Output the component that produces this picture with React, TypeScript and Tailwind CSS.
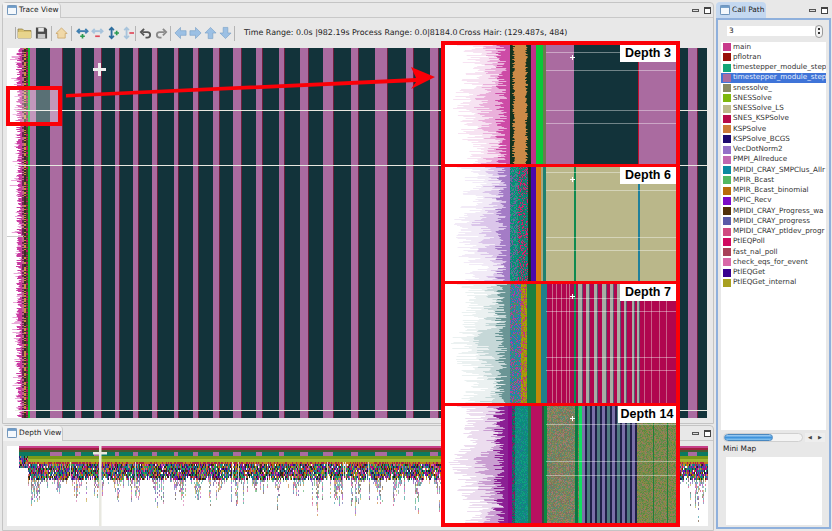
import { ReactNode } from 'react';

type Bar = [number, number, number, number, string, number?];

const DARK = '#12333a';
const PINK = '#aa6ba0';
const PALETTE = ['#7a10b0', '#0a8a70', '#b0a020', '#c01a60', '#2a1a80', '#3aa050', '#d060a0', '#4f5aa0', '#503010', '#10808f', '#c06a10', '#202020'];

// small seeded generator so the picture is the same on every run
function makeRandom(seed: number) {
  let s = seed;
  return () => {
    s = (s * 16807) % 2147483647;
    return (s - 1) / 2147483646;
  };
}

const CALLS: [string, string][] = [
  ['main', '#c83a8c'],
  ['pflotran', '#990f0a'],
  ['timestepper_module_step', '#12a678'],
  ['timestepper_module_step', '#aa6ba0'],
  ['snessolve_', '#8a8a62'],
  ['SNESSolve', '#7fb80e'],
  ['SNESSolve_LS', '#bcb98a'],
  ['SNES_KSPSolve', '#b80a4a'],
  ['KSPSolve', '#cc7a38'],
  ['KSPSolve_BCGS', '#1e0a70'],
  ['VecDotNorm2', '#9470c8'],
  ['PMPI_Allreduce', '#c068b0'],
  ['MPIDI_CRAY_SMPClus_Allr', '#0a8aa0'],
  ['MPIR_Bcast', '#52b860'],
  ['MPIR_Bcast_binomial', '#b86a0a'],
  ['MPIC_Recv', '#7a0ac8'],
  ['MPIDI_CRAY_Progress_wa', '#50300a'],
  ['MPIDI_CRAY_progress', '#5a5aa8'],
  ['MPIDI_CRAY_ptldev_progr', '#d04a80'],
  ['PtlEQPoll', '#d00a60'],
  ['fast_nal_poll', '#a84058'],
  ['check_eqs_for_event', '#d868a8'],
  ['PtlEQGet', '#38008f'],
  ['PtlEQGet_internal', '#a8a020'],
];

// pink stripes of the trace view, in canvas pixels (canvas starts at x=7)
const STRIPES = [
  [43, 12], [68, 6], [87, 7], [108, 4], [126, 5], [145, 5], [167, 4], [186, 5], [206, 6], [226, 8],
  [249, 6], [272, 5], [293, 8], [316, 10], [344, 7], [368, 12], [399, 7], [423, 8], [465, 10], [490, 8],
  [515, 9], [540, 7], [565, 8], [590, 9], [615, 7], [640, 8], [681, 9],
];

function traceBars(): Bar[] {
  const r = makeRandom(11);
  const bars: Bar[] = [[29, 0, 671, 370, DARK]];
  STRIPES.forEach(([x, w]) => {
    bars.push([x, 0, w, 370, PINK]);
    bars.push([x + w, 0, 0.8, 370, '#a01840', 0.8]);
  });
  for (let y = 0; y < 370; y += 1) {
    const a = 15 - r() * r() * 13;
    bars.push([a, y, 15 - a, 1, '#e9a6d8']);
    const b = 15 - r() * 6;
    bars.push([b, y, 15 - b, 1, '#c93aa0']);
    bars.push([15, y, 2, 1, r() > 0.5 ? '#6a2a50' : '#c0608a']);
    bars.push([17, y, 2, 1, r() > 0.5 ? '#c89040' : '#3a3020']);
    bars.push([19, y, 2, 1, r() > 0.6 ? '#b01060' : '#504030']);
  }
  bars.push([21, 0, 2, 370, '#10c030']);
  bars.push([23, 0, 6, 370, PINK]);
  [62, 117, 362].forEach((y) => bars.push([8, y, 692, 1, '#e8e8e0']));
  bars.push([0, 188, 16, 1, '#cccccc']);
  // cross hair
  bars.push([86, 20, 13, 3, '#f0f0f0']);
  bars.push([91, 15, 3, 13, '#f0f0f0']);
  return bars;
}

function jagged(bars: Bar[], r: () => number, h: number, color: string, strong: string, edge = 66) {
  for (let y = 0; y < h; y += 1) {
    const swing = Math.sin(y / 13) * 6 + Math.sin(y / 5) * 3;
    const a = 12 + r() * 24 + swing;
    bars.push([a, y, edge - a, 1, color, 0.16]);
    const b = 34 + r() * 18 + swing;
    bars.push([b, y, edge - b, 1, color, 0.35]);
    const c = edge - 3 - r() * 12;
    bars.push([c, y, edge - c, 1, strong, 0.85]);
  }
}

function noise(bars: Bar[], r: () => number, x: number, w: number, h: number, colors: string[]) {
  for (let i = 0; i < w; i += 1) {
    for (let y = 0; y < h; y += 1) {
      bars.push([x + i, y, 1, 1, colors[Math.floor(r() * colors.length)]]);
    }
  }
}

function hairlines(bars: Bar[], h: number, ys: number[]) {
  ys.forEach((y) => {
    if (y < h) bars.push([101, y, 130, 1, '#ffffff', 0.4]);
  });
  bars.push([125, 12, 5, 1, '#ffffff']);
  bars.push([127, 10, 1, 5, '#ffffff']);
}

function depth3(): Bar[] {
  const r = makeRandom(21);
  const h = 119;
  const bars: Bar[] = [];
  jagged(bars, r, h, '#d050b0', '#c83a9c', 65);
  bars.push([65, 0, 21, h, '#14331f']);
  for (let y = 0; y < h; y += 1) {
    const a = 67 + r() * 3;
    bars.push([a, y, 80 + r() * 3 - a, 1, '#cc8a48']);
  }
  bars.push([86, 0, 5, h, '#c0308a']);
  bars.push([91, 0, 7, h, '#08c838']);
  bars.push([98, 0, 3, h, '#6a7a50']);
  bars.push([101, 0, 28, h, PINK]);
  bars.push([129, 0, 65, h, DARK]);
  bars.push([194, 0, 37, h, PINK]);
  bars.push([193, 0, 1, h, '#c01030']);
  hairlines(bars, h, [7, 25, 65, 78]);
  return bars;
}

function depth6(): Bar[] {
  const r = makeRandom(33);
  const h = 114;
  const bars: Bar[] = [];
  jagged(bars, r, h, '#b080d0', '#9a70c0', 65);
  noise(bars, r, 65, 8, h, ['#0a8a78', '#0a8a78', '#20a080', '#7a5aa0']);
  noise(bars, r, 73, 10, h, ['#0a8a78', '#0a8a78', '#e01a70', '#2a6a60']);
  bars.push([83, 0, 3, h, '#14331f']);
  bars.push([86, 0, 5, h, '#4a08a8']);
  bars.push([91, 0, 5, h, '#d87a10']);
  bars.push([96, 0, 2, h, '#a8a880']);
  bars.push([98, 0, 3, h, '#208070']);
  bars.push([101, 0, 130, h, '#bab78a']);
  bars.push([129, 0, 2, h, '#0f8a50']);
  bars.push([193, 0, 2, h, '#20809a']);
  hairlines(bars, h, [5, 23, 70, 83]);
  return bars;
}

function depth7(): Bar[] {
  const r = makeRandom(45);
  const h = 119;
  const bars: Bar[] = [];
  jagged(bars, r, h, '#80a8a8', '#5a8a8a', 65);
  noise(bars, r, 65, 11, h, ['#20909a', '#b040a0', '#508a60', '#2080b0']);
  noise(bars, r, 76, 6, h, ['#a8a008', '#a8a008', '#c03080', '#a09010']);
  bars.push([82, 0, 9, h, '#1a8040']);
  bars.push([91, 0, 5, h, '#c08a08']);
  bars.push([96, 0, 6, h, '#20808a']);
  bars.push([102, 0, 129, h, '#b0064f']);
  [107, 111, 116, 121, 124].forEach((x) => bars.push([x, 0, 1, h, '#d08098', 0.8]));
  bars.push([129, 0, 2, h, '#0a8a50']);
  [
    [133, 4], [141, 3], [149, 3], [157, 4], [165, 3], [172, 3], [179, 2], [187, 2], [192, 2],
  ].forEach(([x, w]) => {
    bars.push([x, 0, w, h, '#a8aca4']);
    bars.push([x + w, 0, 1, h, '#209088', 0.6]);
  });
  [199, 206, 214, 221].forEach((x) => bars.push([x, 0, 1, h, '#c86088']));
  hairlines(bars, h, [14, 27, 73, 86]);
  return bars;
}

function depth14(): Bar[] {
  const r = makeRandom(57);
  const h = 117;
  const bars: Bar[] = [];
  jagged(bars, r, h, '#8a2a9a', '#800a8a', 63);
  bars.push([63, 0, 4, h, '#8a0a8a']);
  noise(bars, r, 67, 3, h, ['#0a6a60', '#802060', '#206a70']);
  noise(bars, r, 70, 13, h, ['#0a8a80', '#108a78', '#207a90', '#10a080']);
  bars.push([83, 0, 3, h, '#207a50']);
  bars.push([86, 0, 11, h, '#b81060']);
  bars.push([97, 0, 2, h, '#404040']);
  bars.push([99, 0, 3, h, '#0a8a40']);
  const olive = ['#8a8a50', '#6a8a60', '#a07a70', '#80705a', '#5a8a70'];
  noise(bars, r, 102, 28, h, olive);
  bars.push([130, 0, 3, h, '#0a7a40']);
  noise(bars, r, 133, 1, h, olive);
  bars.push([134, 0, 3, h, '#10e060']);
  for (let x = 137; x < 192; x += 5) {
    bars.push([x, 0, 3, h, x % 2 ? '#7a70a8' : '#507a80']);
    bars.push([x + 3, 0, 2, h, '#202048']);
  }
  noise(bars, r, 192, 39, h, ['#7a8a50', '#8a8a40', '#6a8a50', '#9a7a60', '#5a8a40']);
  [208, 222].forEach((x) => bars.push([x, 0, 1, h, '#20803a']));
  hairlines(bars, h, [18, 55, 69]);
  return bars;
}

function depthViewBars(): Bar[] {
  const r = makeRandom(71);
  const bars: Bar[] = [];
  const W = 701;
  bars.push([12, 0, W - 12, 2, '#c8408a']);
  bars.push([12, 2, W - 12, 2, '#a02040']);
  bars.push([12, 4, W - 12, 2, '#4a5a30']);
  bars.push([12, 6, W - 12, 4, '#0a7a60']);
  STRIPES.forEach(([s, w]) => bars.push([s, 6, w, 4, PINK]));
  bars.push([12, 10, W - 12, 3, '#7a9a18']);
  bars.push([12, 13, W - 12, 3, '#a0b830']);
  for (let x = 12; x < W; x += 1) {
    bars.push([x, 16, 1, 2, r() > 0.5 ? '#b02048' : '#c07a20']);
    if (x < 21) {
      for (let y = 10; y < 22; y += 2) bars.push([x, y, 1, 2, PALETTE[Math.floor(r() * PALETTE.length)]]);
      continue;
    }
    // hanging stacks come in clusters along the time axis
    const cluster = Math.pow(Math.abs(Math.sin((x * Math.PI) / 20)), 6);
    const depth = 28 + r() * 6 + cluster * r() * 30 + Math.pow(r(), 8) * 30;
    for (let y = 18; y < depth; y += 2) {
      const fade = y > 32 ? 0.55 : 1;
      if (r() < (y > 32 ? 0.7 : 0.96)) bars.push([x, y, 1, 2, PALETTE[Math.floor(r() * PALETTE.length)], fade]);
    }
    if (r() > 0.985) bars.push([x, 16, 1, 20 + r() * 10, '#ffffff', 0.7]);
  }
  bars.push([92, 0, 2.5, 80, '#e8e8e0']);
  bars.push([86, 6, 14, 2.5, '#e8e8e0']);
  return bars;
}

function Bars({ w, h, bars, className }: { w: number; h: number; bars: Bar[]; className?: string }) {
  return (
    <svg viewBox={`0 0 ${w} ${h}`} width={w} height={h} className={className}>
      {bars.map(([x, y, bw, bh, fill, opacity], i) => (
        <rect key={i} x={x} y={y} width={bw} height={bh} fill={fill} opacity={opacity} />
      ))}
    </svg>
  );
}

function ViewIcon() {
  return (
    <svg viewBox="0 0 12 12" className="w-[10px] h-[10px] shrink-0">
      <rect x="0.5" y="0.5" width="11" height="11" rx="1" fill="#f4f8fc" stroke="#4a78a8" />
      <rect x="1" y="1" width="10" height="2.5" fill="#6f9cc8" />
    </svg>
  );
}

function WindowButtons({ className = '' }: { className?: string }) {
  return (
    <div className={`flex items-center gap-[5px] ${className}`}>
      <div className="w-[7px] h-[3px] border border-[#555] bg-[#ddd]" />
      <div className="w-[7px] h-[7px] border border-[#444] border-t-2 bg-white" />
    </div>
  );
}

function Sep() {
  return <div className="w-px h-[15px] bg-[#b4b4b4] shrink-0" />;
}

function IconSvg({ children, w = 13 }: { children: ReactNode; w?: number }) {
  return (
    <svg viewBox="0 0 14 14" width={w} height={14} className="shrink-0">
      {children}
    </svg>
  );
}

function BlockArrow({ rot, fill = '#9cc0e4' }: { rot: number; fill?: string }) {
  return (
    <IconSvg>
      <path
        d="M1 7 L7 1 L7 4.5 L13 4.5 L13 9.5 L7 9.5 L7 13 Z"
        fill={fill}
        stroke="#7aa0c8"
        strokeWidth="0.7"
        transform={`rotate(${rot} 7 7)`}
      />
    </IconSvg>
  );
}

function ZoomArrow({ vertical, color, sign, signColor }: { vertical: boolean; color: string; sign: '+' | '-'; signColor: string }) {
  return (
    <IconSvg>
      <g transform={vertical ? 'rotate(90 7 7) translate(0 3)' : ''} fill="none" stroke={color} strokeWidth="2">
        <path d="M2 5 H12" />
        <path d="M4 2.5 L1.5 5 L4 7.5" />
        <path d="M10 2.5 L12.5 5 L10 7.5" />
      </g>
      {vertical ? (
        <path d={sign === '+' ? 'M9 7 H14 M11.5 4.5 V9.5' : 'M9 7 H14'} stroke={signColor} strokeWidth="1.8" />
      ) : (
        <path d={sign === '+' ? 'M4.5 10.5 H9.5 M7 8 V13' : 'M4.5 10.5 H9.5'} stroke={signColor} strokeWidth="1.8" />
      )}
    </IconSvg>
  );
}

function Toolbar() {
  return (
    <div className="h-[30px] flex items-center pl-[12px] text-[7.9px] text-[#222] shrink-0">
      <div className="w-px h-[12px] bg-[#aaa] mr-px" />
      <IconSvg w={15}>
        <path d="M0.5 3 H5 L6.5 4.5 H13.5 V12 H0.5 Z" fill="#d8c070" stroke="#8a7a40" strokeWidth="0.7" />
        <path d="M0.5 6 H13.5 V12 H0.5 Z" fill="#e8d48c" />
      </IconSvg>
      <div className="ml-[3px]">
        <IconSvg>
          <path d="M1 1 H11 L13 3 V13 H1 Z" fill="#4a4a4a" />
          <rect x="3.5" y="1.5" width="6" height="4" fill="#e8e8e8" />
          <rect x="3" y="8" width="8" height="5" fill="#c8c8c8" />
        </IconSvg>
      </div>
      <div className="mx-[3px]"><Sep /></div>
      <IconSvg>
        <path d="M7 1.5 L13 7.5 H11 V12.5 H3 V7.5 H1 Z" fill="#f0d8a8" stroke="#c8a060" strokeWidth="0.8" />
      </IconSvg>
      <div className="mx-[3px]"><Sep /></div>
      <div className="flex items-center gap-[2px] ml-[1px]">
        <ZoomArrow vertical={false} color="#3f7fb0" sign="+" signColor="#2a9a50" />
        <ZoomArrow vertical={false} color="#a8c4dc" sign="-" signColor="#e04a5a" />
        <ZoomArrow vertical color="#2f6f9f" sign="+" signColor="#2a9a50" />
        <ZoomArrow vertical color="#a8c4dc" sign="-" signColor="#e04a5a" />
      </div>
      <div className="ml-[1px] mr-[3px]"><Sep /></div>
      <div className="flex items-center gap-[3px]">
        <IconSvg>
          <path d="M4 6 H9 A3 3 0 0 1 9 12 H7 M5.5 2.5 L2 6 L5.5 9.5" fill="none" stroke="#555" strokeWidth="2" />
        </IconSvg>
        <IconSvg>
          <path d="M10 6 H5 A3 3 0 0 0 5 12 H7 M8.5 2.5 L12 6 L8.5 9.5" fill="none" stroke="#8a8a8a" strokeWidth="2" />
        </IconSvg>
      </div>
      <div className="ml-[2px] mr-[3px]"><Sep /></div>
      <div className="flex items-center gap-[2px]">
        <BlockArrow rot={0} />
        <BlockArrow rot={180} />
        <BlockArrow rot={90} />
        <BlockArrow rot={-90} />
      </div>
      <div className="ml-[2px]"><Sep /></div>
      <div className="ml-[9px] w-[108px] whitespace-nowrap">Time Range: 0.0s |982.19s</div>
      <div className="w-[107px] whitespace-nowrap">Process Range: 0.0|8184.0</div>
      <div className="whitespace-nowrap">Cross Hair: (129.487s, 484)</div>
    </div>
  );
}

function DepthPanel({ label, height, bars, labelWidth }: { label: string; height: number; bars: Bar[]; labelWidth: string }) {
  return (
    <div className="relative overflow-hidden bg-white shrink-0" style={{ height }}>
      <Bars w={231} h={height} bars={bars} className="block blur-[0.5px]" />
      <div className={`absolute right-0 top-0 h-[17px] bg-white flex items-center justify-center whitespace-nowrap font-bold text-[12.5px] text-black font-['Liberation_Sans',sans-serif] ${labelWidth}`}>
        {label}
      </div>
    </div>
  );
}

export default function App() {
  return (
    <div className="relative w-[832px] h-[531px] overflow-hidden bg-[#e8e8e8] flex font-['DejaVu_Sans','Liberation_Sans',sans-serif]">
      <div className="w-[716px] flex flex-col pt-[2px] shrink-0">
        {/* trace view */}
        <div className="h-[422px] mx-[2px] border border-[#c4c4c4] rounded-t flex flex-col shrink-0">
          <div className="h-[15px] flex items-center justify-between border-b border-[#c8c8c8] shrink-0">
            <div className="h-[15px] w-[58px] bg-[#f2f2f2] border-r border-[#c8c8c8] rounded-tr flex items-center gap-[2px] pl-[4px] text-[7.4px] text-[#222]">
              <ViewIcon />
              <span className="whitespace-nowrap">Trace View</span>
            </div>
            <WindowButtons className="mr-[2px]" />
          </div>
          <Toolbar />
          <div className="ml-[4px] w-[700px] h-[370px] bg-white">
            <Bars w={700} h={370} bars={traceBars()} className="block blur-[0.4px]" />
          </div>
        </div>
        {/* depth view */}
        <div className="flex-1 mt-[1px] mx-[2px] border border-[#c4c4c4] rounded-t flex flex-col">
          <div className="h-[15px] flex items-center justify-between border-b border-[#c8c8c8] shrink-0">
            <div className="h-[15px] w-[60px] bg-[#f2f2f2] border-r border-[#c8c8c8] rounded-tr flex items-center gap-[2px] pl-[4px] text-[7.4px] text-[#222]">
              <ViewIcon />
              <span className="whitespace-nowrap">Depth View</span>
            </div>
            <WindowButtons className="mr-[2px]" />
          </div>
          <div className="ml-[4px] mt-[5px] w-[701px] h-[80px] bg-white overflow-hidden">
            <Bars w={701} h={80} bars={depthViewBars()} className="block blur-[0.4px]" />
          </div>
        </div>
      </div>

      {/* call path */}
      <div className="flex-1 pt-[2px] pb-[2px] pr-[1px] flex flex-col min-w-0">
        <div className="flex items-center justify-between h-[16px] shrink-0">
          <div className="h-[16px] w-[50px] bg-[#c4d8f0] rounded-t flex items-center gap-[2px] pl-[4px] text-[7.4px] text-[#222]">
            <ViewIcon />
            <span className="whitespace-nowrap">Call Path</span>
          </div>
          <WindowButtons className="mr-[3px]" />
        </div>
        <div className="flex-1 border-2 border-[#8fb0dc] flex flex-col min-h-0 px-[3px]">
          <div className="h-[22px] flex items-center pl-[6px] shrink-0">
            <div className="w-[88px] h-[10px] bg-white text-[7.4px] leading-[10px] pl-[2px] text-[#222]">3</div>
            <div className="w-[8px] h-[13px] rounded-sm border border-[#999] bg-[#f4f4f4] flex flex-col items-center justify-center gap-[2px]">
              <div className="w-[2px] h-[2px] bg-[#333]" />
              <div className="w-[2px] h-[2px] bg-[#333]" />
            </div>
          </div>
          <div className="h-[388px] bg-white overflow-hidden shrink-0">
            {CALLS.map(([name, color], i) => (
              <div
                key={i}
                className={`h-[10.25px] flex items-center gap-[2px] pl-[2px] text-[7.2px] whitespace-nowrap ${i === 3 ? 'bg-[#3f74d8] text-[#e8eefc]' : 'text-[#333]'}`}
              >
                <div className="w-[8px] h-[8px] shrink-0" style={{ backgroundColor: color }} />
                <span>{name}</span>
              </div>
            ))}
          </div>
          <div className="h-[14px] flex items-center pl-[2px] shrink-0">
            <div className="w-[80px] h-[9px] rounded-full bg-[#f4f4f4] border border-[#d0d0d0] overflow-hidden">
              <div className="w-[49px] h-full rounded-full bg-gradient-to-b from-[#a8d4f4] via-[#3f94dc] to-[#8cc8f0] border border-[#4a88c0]" />
            </div>
            <div className="w-[10px] h-[9px] ml-[2px] text-[5px] leading-[9px] text-center text-[#444] bg-[#eee]">◀</div>
            <div className="w-[10px] h-[9px] text-[5px] leading-[9px] text-center text-[#444] bg-[#eee]">▶</div>
          </div>
          <div className="text-[7.4px] leading-[10px] pl-[2px] text-[#222] shrink-0">Mini Map</div>
          <div className="ml-[5px] mt-[3px] w-[96px] h-[68px] bg-white shrink-0" />
        </div>
      </div>

      {/* annotation overlaid on the screenshot */}
      <div className="absolute left-[6px] top-[86px] w-[56px] h-[40px] border-4 border-[#fb0007] bg-white/30" />
      <svg viewBox="0 0 832 531" className="absolute inset-0 w-[832px] h-[531px] pointer-events-none">
        <path d="M66 94 L416 78 L411 67 L435 77 L411 89 L416 82 L66 97.5 Z" fill="#fb0007" />
      </svg>
      <div className="absolute left-[441px] top-[41px] w-[239px] h-[486px] border-4 border-[#fb0007] bg-[#fb0007] flex flex-col gap-[3px]">
        <DepthPanel label="Depth 3" height={119} bars={depth3()} labelWidth="w-[56px]" />
        <DepthPanel label="Depth 6" height={114} bars={depth6()} labelWidth="w-[56px]" />
        <DepthPanel label="Depth 7" height={119} bars={depth7()} labelWidth="w-[56px]" />
        <DepthPanel label="Depth 14" height={117} bars={depth14()} labelWidth="w-[58px]" />
      </div>
    </div>
  );
}
